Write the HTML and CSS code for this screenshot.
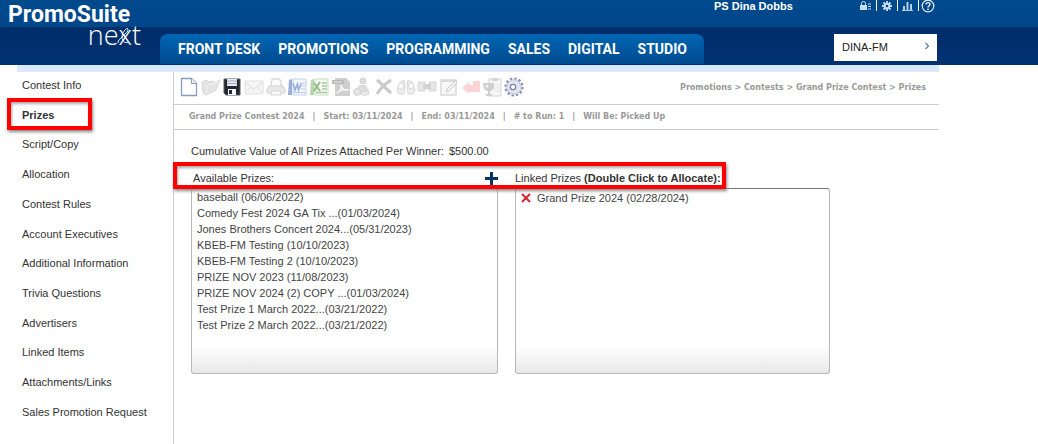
FILE: index.html
```html
<!DOCTYPE html>
<html lang="en">
<head>
<meta charset="utf-8">
<title>PromoSuite next – Prizes</title>
<link rel="stylesheet" href="styles.css">
</head>
<body>
<header class="header">
  <div class="header-inner">
    <a class="logo" href="#">
      <span class="logo-name">PromoSuite</span>
      <span class="logo-next">next<svg class="logo-swirl" viewBox="0 0 14 18" aria-hidden="true"><path d="M1 16C0 12 12 6 11 2C10 0 5 5 5 10C5 14 8 17 11 15" fill="none" stroke="#fff" stroke-width="1"/></svg></span>
    </a>
    <nav class="main-nav" aria-label="Main">
      <a href="#">FRONT DESK</a>
      <a href="#">PROMOTIONS</a>
      <a href="#">PROGRAMMING</a>
      <a href="#">SALES</a>
      <a href="#">DIGITAL</a>
      <a href="#">STUDIO</a>
    </nav>
    <div class="account">
      <div class="user-row">
        <span class="user-name">PS Dina Dobbs</span>
        <div class="tools">
          <button aria-label="Lock"><svg width="12" height="10" viewBox="0 0 12 10"><path d="M0 4h7v5H0z" fill="#c9def3"/><path d="M1.500 4V2.500a2 2 0 0 1 4 0V4" fill="none" stroke="#c9def3"/><path d="M8 3h3M8 5.500h3M8 8h3" stroke="#c9def3"/></svg></button>
          <button aria-label="Settings"><svg width="12" height="12" viewBox="0 0 12 12"><path d="M6 1v10M1 6h10M2.500 2.500l7 7M9.500 2.500l-7 7" stroke="#c9def3" stroke-width="1.800"/><circle cx="6" cy="6" r="3.200" fill="#c9def3"/><circle cx="6" cy="6" r="1.300" fill="#00468a"/></svg></button>
          <button aria-label="Reports"><svg width="12" height="10" viewBox="0 0 12 10"><path d="M1 5h2v4H1zM4.500 1h2v8h-2zM8 3h2v6H8z" fill="#b5cfea"/><path d="M0 9.500h11" stroke="#b5cfea"/></svg></button>
          <button aria-label="Help"><svg width="14" height="14" viewBox="0 0 14 14"><circle cx="7" cy="7" r="5.800" fill="none" stroke="#e8f1fa" stroke-width="1.200"/><path d="M5 5.500C5 3 9 3 9 5.300C9 6.700 7 6.800 7 8.500M7 9.500V11" fill="none" stroke="#e8f1fa" stroke-width="1.400"/></svg></button>
        </div>
      </div>
      <div class="station">
        <select aria-label="Station"><option>DINA-FM</option></select>
        <svg class="chevron" width="6" height="8" viewBox="0 0 6 8" aria-hidden="true"><path d="M1.500 1l3 3l-3 3" fill="none" stroke="#4d7fa3" stroke-width="1.200"/></svg>
      </div>
    </div>
  </div>
</header>
<div class="page">
  <aside class="sidebar">
    <ul class="side-list">
      <li><a href="#">Contest Info</a></li>
      <li class="current"><a href="#" aria-current="page">Prizes</a></li>
      <li><a href="#">Script/Copy</a></li>
      <li><a href="#">Allocation</a></li>
      <li><a href="#">Contest Rules</a></li>
      <li><a href="#">Account Executives</a></li>
      <li><a href="#">Additional Information</a></li>
      <li><a href="#">Trivia Questions</a></li>
      <li><a href="#">Advertisers</a></li>
      <li><a href="#">Linked Items</a></li>
      <li><a href="#">Attachments/Links</a></li>
      <li><a href="#">Sales Promotion Request</a></li>
    </ul>
  </aside>
  <main class="main">
    <div class="toolbar">
      <div class="icons">
        <button aria-label="New"><svg viewBox="0 0 20 20"><path d="M2.500 1.500h10l5 5v12h-15z" fill="#fff" stroke="#8a9cbc" stroke-width="1.300"/><path d="M12.500 1.500v5h5" fill="#eef2f8" stroke="#8a9cbc"/></svg></button>
        <button class="off" aria-label="Open"><svg viewBox="0 0 20 20"><path d="M1 5l5-2l2 2l5-1l1 2l5-3l-4 10L5 18L2 16z" fill="#dedede" stroke="#d0d0d0"/><path d="M5 17l2-9l11-3" fill="none" stroke="#eee"/></svg></button>
        <button aria-label="Save"><svg viewBox="0 0 20 20"><path d="M2 2h16v16H4l-2-2z" fill="#25272d" stroke="#555b68"/><path d="M5 2h10v7H5z" fill="#e2e8ef"/><path d="M5 4h10M5 6.500h10" stroke="#a8afb9"/><path d="M6 12h8v6H6z" fill="#f6f7f8"/><path d="M7 13h3v4H7z" fill="#25272d"/></svg></button>
        <button class="off" aria-label="Email"><svg viewBox="0 0 20 20"><rect x="1" y="4" width="18" height="13" rx="1" fill="#f3f3f3" stroke="#d9d9d9"/><path d="M1 5l9 7l9-7M1 16l6-6M19 16l-6-6" fill="none" stroke="#dadada"/></svg></button>
        <button class="off" aria-label="Print"><svg viewBox="0 0 20 20"><path d="M5 9l1-7h7l2 2v5" fill="#fafafa" stroke="#cfcfcf" stroke-width="1.300"/><path d="M3 9h14l2 3v4H1v-4z" fill="#e2e2e2" stroke="#c8c8c8"/><path d="M5 14h10v4H5z" fill="#f8f8f8" stroke="#ccc"/></svg></button>
        <button class="off" aria-label="Export to Word"><svg viewBox="0 0 20 20"><path d="M6 2h13v16H6z" fill="#f3f6fc" stroke="#b9c8e4"/><path d="M2 3l3-1v16H1z" fill="#7f9cd0"/><path d="M6 6l2 7l2.500-6l1 6l3-7" fill="none" stroke="#7f9cd0" stroke-width="1.600"/><path d="M15 6h3M15 9h3M14 12h4M7 15.500h11" stroke="#a7badd"/></svg></button>
        <button class="off" aria-label="Export to Excel"><svg viewBox="0 0 20 20"><path d="M6 2h13v16H6z" fill="#f4faf1" stroke="#bcd7b1"/><path d="M2 3l3-1v16H1z" fill="#a6cc98"/><path d="M5 6l6 8M11 5l-6 9" stroke="#79ad66" stroke-width="2"/><path d="M13 6h5M13 9h5M13 12h5M7 15.500h11" stroke="#93bc83" stroke-width="1.400"/></svg></button>
        <button class="off" aria-label="Export to PDF"><svg viewBox="0 0 20 20"><path d="M4 1h11l4 4v14H4z" fill="#c4c4c4"/><path d="M1 3h12v4H1z" fill="#a8a8a8"/><path d="M3 5h8" stroke="#ddd"/><path d="M6 16c3-1 5-5 4-8c1 4 4 6 7 5c-4-1-8 0-11 3z" fill="none" stroke="#f8f8f8" stroke-width="1.300"/></svg></button>
        <button class="off" aria-label="Assign"><svg viewBox="0 0 20 20"><circle cx="11" cy="4" r="3" fill="#d5d5d5" stroke="#c8c8c8"/><path d="M7 8h7l3 6l-4 4H6l-3-4z" fill="#d4d4d4"/><circle cx="5" cy="15" r="3.500" fill="#dedede" stroke="#cacaca"/><path d="M9 15l7-1l1 3l-6 2" fill="#e6e6e6" stroke="#ccc"/></svg></button>
        <button class="off" aria-label="Delete"><svg viewBox="0 0 20 20"><path d="M3 3c4 3 9 9 14 13M17 3C11 7 6 12 3 17" fill="none" stroke="#bdbdbd" stroke-width="3"/></svg></button>
        <button class="off" aria-label="Find"><svg viewBox="0 0 20 20"><path d="M4 5l4-2l1 6l-1 8H3l-2-4zM16 5l-4-2l-1 6l1 8h5l2-4z" fill="#e8e8e8" stroke="#cecece"/><circle cx="5" cy="9" r="3" fill="#f8f8f8" stroke="#d0d0d0"/><circle cx="15" cy="9" r="3" fill="#f8f8f8" stroke="#d0d0d0"/></svg></button>
        <button class="off" aria-label="Link"><svg viewBox="0 0 20 20"><path d="M1 5h7v9H1zM12 5h7v9h-7z" fill="#ddd" stroke="#d0d0d0"/><path d="M6 7h8v5H6z" fill="#c8c8c8"/><path d="M2 8h4M2 11h4M14 8h4M14 11h4" stroke="#efefef"/></svg></button>
        <button class="off" aria-label="Edit"><svg viewBox="0 0 20 20"><rect x="2" y="3" width="15" height="15" fill="#f7f7f7" stroke="#cecece" stroke-width="1.400"/><path d="M2 4h16" stroke="#d0d0d0" stroke-width="2"/><path d="M7 15l1-3l8-8l2 2l-8 8z" fill="#eee" stroke="#c4c4c4"/></svg></button>
        <button aria-label="Back"><svg viewBox="0 0 20 20"><path d="M1 11l7-6v3h4V4h7v11H8v2z" fill="#ffd3d3"/></svg></button>
        <button class="off" aria-label="Awards"><svg viewBox="0 0 20 20"><path d="M7 2h12v17H7z" fill="#f5f5f5" stroke="#c9c9c9"/><path d="M10 1h6v3h-6z" fill="#ccc"/><path d="M13 8h5M13 11h5M12 14h6" stroke="#ddd"/><path d="M1 6h11v4c0 3-3 4-4 4v3h2v2H4v-2h2v-3C3 14 1 11 1 6z" fill="#c4c4c4"/><circle cx="5" cy="9" r="1.500" fill="#eee"/></svg></button>
        <button aria-label="Options"><svg viewBox="0 0 20 20"><circle cx="10" cy="10" r="8.500" fill="none" stroke="#8791ae" stroke-width="2.200" stroke-dasharray="2.400 2.050"/><circle cx="10" cy="10" r="7.200" fill="#e1e4f0" stroke="#b9bfd6"/><circle cx="9" cy="10" r="2.700" fill="#fff" stroke="#7c849f" stroke-width="1.300"/></svg></button>
      </div>
      <div class="crumbs">Promotions &gt; Contests &gt; Grand Prize Contest &gt; Prizes</div>
    </div>
    <div class="info">
      <span>Grand Prize Contest 2024</span><span>|</span><span>Start: 03/11/2024</span><span>|</span><span>End: 03/11/2024</span><span>|</span><span># to Run: 1</span><span>|</span><span>Will Be: Picked Up</span>
    </div>
    <div class="content">
      <p class="total"><span>Cumulative Value of All Prizes Attached Per Winner:</span><span>$500.00</span></p>
      <div class="prizes">
        <section class="available">
          <div class="list-head">
            <label for="available">Available Prizes:</label>
            <button aria-label="Add prize"><svg width="13" height="13" viewBox="0 0 13 13"><path d="M5 0h3v5h5v3H8v5H5V8H0V5h5z" fill="#003768"/></svg></button>
          </div>
          <select id="available" class="list-box" multiple>
            <option>baseball (06/06/2022)</option>
            <option>Comedy Fest 2024 GA Tix ...(01/03/2024)</option>
            <option>Jones Brothers Concert 2024...(05/31/2023)</option>
            <option>KBEB-FM Testing (10/10/2023)</option>
            <option>KBEB-FM Testing 2 (10/10/2023)</option>
            <option>PRIZE NOV 2023 (11/08/2023)</option>
            <option>PRIZE NOV 2024 (2) COPY ...(01/03/2024)</option>
            <option>Test Prize 1 March 2022...(03/21/2022)</option>
            <option>Test Prize 2 March 2022...(03/21/2022)</option>
          </select>
        </section>
        <section class="linked">
          <div class="list-head linked-head"><h2>Linked Prizes <b>(Double Click to Allocate):</b></h2></div>
          <ul class="list-box linked-list">
            <li><button aria-label="Remove prize"><svg width="10" height="10" viewBox="0 0 10 10"><path d="M1 1l8 8M9 1L1 9" stroke="#d8232f" stroke-width="2"/></svg></button><span>Grand Prize 2024 (02/28/2024)</span></li>
          </ul>
        </section>
        <div class="callout"></div>
      </div>
    </div>
  </main>
</div>
</body>
</html>
```

FILE: styles.css
```css
*, *::before, *::after { box-sizing: border-box; }
body {
  margin: 0;
  background: #fff;
  color: #333;
  font: 11px/13px "Liberation Sans", Arial, sans-serif;
}
a { color: inherit; text-decoration: none; }
button { display: flex; margin: 0; padding: 0; border: 0; background: none; cursor: pointer; }
ul { margin: 0; padding: 0; list-style: none; }

.header {
  background:
    linear-gradient(#003365, #003365) 0 27px / 100% 1px no-repeat,
    linear-gradient(#004a8c, #00468a) 0 0 / 100% 28px no-repeat,
    linear-gradient(#003c7c, #002d6b 50%, #003272);
}
.header-inner { display: flex; max-width: 939px; height: 65px; }
.logo {
  flex: 0 0 160px;
  padding: 1px 0 0 8px;
  color: #fff;
}
.logo span { display: block; }
.logo-name { font: 700 23px/27px Roboto, sans-serif; }
.logo-next { position: relative; width: 133px; text-align: right; font: 300 27px/14px "Open Sans", sans-serif; }
.logo-swirl { position: absolute; right: 10px; top: -1px; width: 14px; height: 18px; }
.main-nav {
  align-self: flex-end;
  display: flex;
  gap: 18px;
  height: 30px;
  margin-bottom: 1px;
  padding: 0 17px 0 18px;
  border-radius: 8px 8px 0 0;
  background: linear-gradient(#0066b3, #004a8f);
  color: #fff;
  font: 700 14px/30px Roboto, sans-serif;
}
.account {
  display: flex;
  flex: 1;
  flex-direction: column;
  justify-content: space-between;
  padding: 0 2px 4px 10px;
}
.user-row { display: flex; justify-content: space-between; height: 13px; }
.user-name { color: #fff; font-weight: 700; }
.tools { display: flex; align-items: center; height: 11px; }
.tools button { align-items: center; justify-content: center; height: 11px; padding: 0 4px; border-left: 1px solid #fff; }
.tools button:first-child { border-left: 0; }
.tools button:last-child { padding: 0 2px; }
.station { position: relative; align-self: flex-end; width: 103px; }
.station select {
  display: block;
  width: 100%;
  height: 27px;
  padding: 0 8px;
  border: 0;
  border-radius: 0;
  background: #fff;
  color: #222;
  font: inherit;
  appearance: none;
}
.chevron { position: absolute; right: 7px; top: 8px; pointer-events: none; }

.page {
  display: flex;
  max-width: 939px;
  min-height: calc(100vh - 65px);
  background: linear-gradient(#dbe8fc, #dbe8fc) 17px 0 / 100% 7px no-repeat;
  padding-top: 7px;
}
.sidebar { flex: 0 0 173px; padding: 7px 0 0 22px; }
.side-list { display: flex; flex-direction: column; justify-content: space-between; height: 340px; }
.current { position: relative; font-weight: 700; }
.current::after, .callout {
  position: absolute;
  border: 4px solid #f00;
  box-shadow: 1px 2px 3px #888, inset 1px 2px 3px #aaa;
  content: "";
  pointer-events: none;
}
.current::after { left: -15px; top: -11px; width: 85px; height: 32px; }

.main { flex: 1; border-left: 1px solid #ccc; }
.toolbar {
  display: flex;
  align-items: center;
  justify-content: space-between;
  height: 33px;
  padding: 0 13px 2px 4px;
  border-bottom: 1px solid #ccc;
}
.icons { display: grid; grid-template-columns: repeat(16, 1fr); width: 347px; }
.icons button { justify-content: center; }
.icons svg { width: 20px; height: 20px; }
.off { opacity: 0.8; }
.crumbs, .info { color: #999; font: 700 8px/13px "DejaVu Sans", Verdana, sans-serif; }
.info { display: flex; gap: 8px; padding: 5px 15px 6px; border-bottom: 1px solid #ccc; }
.content { padding: 15px 17px; }
.total { display: flex; gap: 5px; margin: 0; }
.prizes { position: relative; display: flex; gap: 17px; margin-top: 12px; }
.available { flex: 0 1 307px; }
.linked { flex: 0 1 315px; }
.list-head { display: flex; align-items: center; justify-content: space-between; height: 18px; padding: 0 0 2px 2px; }
.linked-head { padding-left: 0; }
h2 { margin: 0; font: inherit; }
.list-box {
  display: block;
  width: 100%;
  height: 186px;
  padding: 2px 5px;
  border: 1px solid #b8b8b8;
  border-top-color: #777;
  border-radius: 3px;
  background: linear-gradient(#fff 85%, #e8e8e8);
  color: #444;
  font: inherit;
  line-height: 16px;
  overflow: hidden;
}
.list-box option { min-height: 16px; padding: 0; line-height: 16px; }
.linked-list { padding-top: 1px; }
.list-box li { display: flex; align-items: center; gap: 6px; }
.callout { left: -18px; top: -8px; width: 553px; height: 27px; }
```
